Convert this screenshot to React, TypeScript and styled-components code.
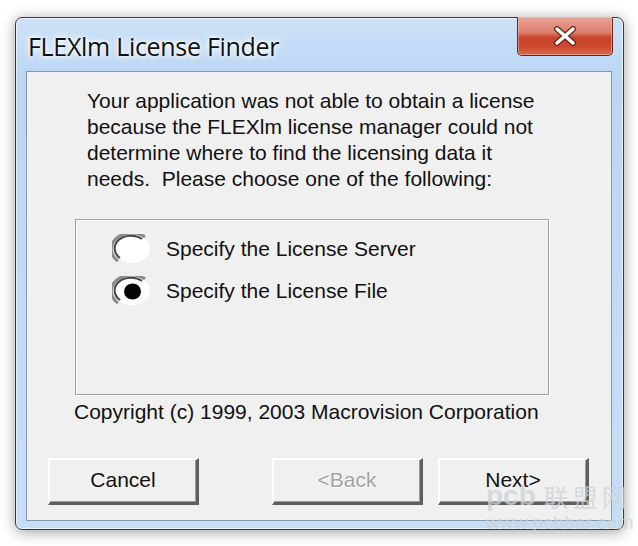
import React from "react";
import styled, { createGlobalStyle } from "styled-components";

const Global = createGlobalStyle`
  html, body { margin: 0; padding: 0; background: #ffffff; }
  body { width: 638px; height: 546px; overflow: hidden; }
`;

const Page = styled.div`
  position: relative;
  width: 638px;
  height: 546px;
  padding: 17px 0 0 15px;
  box-sizing: border-box;
  background: #ffffff;
`;

const Window = styled.div`
  width: 609px;
  height: 513px;
  box-sizing: border-box;
  border: 1px solid #3a3a3a;
  border-radius: 7px;
  background: linear-gradient(180deg, #cde2f8 0%, #b9d6f3 12%, #c3dcf5 60%, #c6def5 100%);
  box-shadow: 0 2px 14px rgba(0, 0, 0, 0.38), inset 0 0 0 1px rgba(255, 255, 255, 0.6);
  padding: 0 11px 8px 10px;
  display: flex;
  flex-direction: column;
`;

const TitleBar = styled.div`
  height: 53px;
  display: flex;
  align-items: flex-start;
  justify-content: space-between;
`;

const Title = styled.div`
  margin-top: 12px;
  margin-left: 2px;
  font-family: "Open Sans", "Noto Sans", sans-serif;
  font-size: 25px;
  line-height: 32px;
  color: #101010;
  text-shadow: 0 0 10px #ffffff, 0 0 6px #ffffff, 0 0 3px #ffffff;
  letter-spacing: -0.3px;
`;

const CloseButton = styled.div`
  width: 96px;
  height: 39px;
  margin-top: -1px;
  margin-right: -1px;
  box-sizing: border-box;
  border: 1px solid #5e2b23;
  border-top: none;
  border-radius: 0 0 5px 5px;
  background: linear-gradient(180deg, #e9a498 0%, #dd7f6e 40%, #c9412a 55%, #cc4b30 80%, #d96a4c 100%);
  box-shadow: inset 0 0 0 1px rgba(255, 200, 190, 0.5);
  display: flex;
  align-items: center;
  justify-content: center;
`;

const Client = styled.div`
  flex: 1;
  box-sizing: border-box;
  border: 1px solid #8598ad;
  background: #f0f0f0;
  display: flex;
  flex-direction: column;
  font-family: "Liberation Sans", Arial, sans-serif;
  font-size: 21px;
  color: #111111;
`;

const Message = styled.p`
  margin: 16px 0 0 60px;
  line-height: 26px;
  width: 470px;
`;

const Group = styled.div`
  margin: 27px 0 0 48px;
  width: 474px;
  height: 176px;
  box-sizing: border-box;
  border: 1px solid #a0a0a0;
  box-shadow: 1px 1px 0 #ffffff, inset 1px 1px 0 #ffffff;
  display: flex;
  flex-direction: column;
  gap: 12px;
  padding: 14px 0 0 36px;
`;

const RadioRow = styled.label`
  display: flex;
  align-items: center;
  height: 30px;
  gap: 14px;
`;

const RadioText = styled.span`
  line-height: 30px;
`;

const Copyright = styled.div`
  margin: 4px 0 0 47px;
  line-height: 26px;
`;

const ButtonRow = styled.div`
  margin: 33px 0 0 21px;
  display: flex;
`;

const Button = styled.div<{ $disabled?: boolean; $gap?: number }>`
  width: 151px;
  height: 47px;
  margin-left: ${(p) => p.$gap ?? 0}px;
  box-sizing: border-box;
  background: #f0f0f0;
  border-top: 2px solid #ffffff;
  border-left: 2px solid #ffffff;
  border-right: 3px solid #5f5f5f;
  border-bottom: 3px solid #5f5f5f;
  box-shadow: inset -1px -1px 0 #a0a0a0;
  display: flex;
  align-items: center;
  justify-content: center;
  padding-bottom: 2px;
  color: ${(p) => (p.$disabled ? "#a3a3a3" : "#111111")};
  text-shadow: ${(p) => (p.$disabled ? "1px 1px 0 #ffffff" : "none")};
`;

const Watermark = styled.div`
  position: absolute;
  left: 486px;
  top: 482px;
  display: flex;
  flex-direction: column;
  align-items: flex-start;
  white-space: nowrap;
  font-family: "Liberation Sans", Arial, "Noto Sans CJK SC", sans-serif;
  color: rgba(205, 210, 215, 0.75);
  pointer-events: none;
`;

const WmTop = styled.div`
  display: flex;
  align-items: center;
  gap: 8px;
  font-size: 28px;
  line-height: 28px;
  font-weight: bold;
`;

const WmCjk = styled.span`
  font-family: "Noto Sans CJK SC", sans-serif;
  font-weight: 400;
  font-size: 25px;
  letter-spacing: 4px;
`;

const WmUrl = styled.div`
  font-size: 19px;
  line-height: 22px;
  margin-top: 2px;
  letter-spacing: 0.3px;
`;

const Radio = ({ checked }: { checked?: boolean }) => (
  <svg width="40" height="30" viewBox="0 0 40 30">
    <ellipse cx="20" cy="15" rx="18" ry="14" fill="#ffffff" />
    <path d="M 6 27 A 17 13.5 0 0 1 33 3" fill="none" stroke="#8a8a8a" strokeWidth="3" />
    <path d="M 8 24 A 14 11 0 0 1 30 5" fill="none" stroke="#444444" strokeWidth="2" />
    <ellipse cx="20.5" cy="15.5" rx="13.5" ry="11.5" fill="#ffffff" />
    {checked && <ellipse cx="20.5" cy="15.5" rx="8.5" ry="8" fill="#050505" />}
  </svg>
);

const CloseGlyph = () => (
  <svg width="26" height="20" viewBox="0 0 26 20">
    <path d="M5 3 L21 17 M21 3 L5 17" stroke="#6a2418" strokeWidth="6" strokeLinecap="round" />
    <path d="M5 3 L21 17 M21 3 L5 17" stroke="#ffffff" strokeWidth="3.5" strokeLinecap="round" />
  </svg>
);

export default function App() {
  return (
    <Page>
      <Global />
      <Window>
        <TitleBar>
          <Title>FLEXlm License Finder</Title>
          <CloseButton>
            <CloseGlyph />
          </CloseButton>
        </TitleBar>
        <Client>
          <Message>
            Your application was not able to obtain a license because the FLEXlm license manager could not
            determine where to find the licensing data it needs.&nbsp; Please choose one of the following:
          </Message>
          <Group>
            <RadioRow>
              <Radio />
              <RadioText>Specify the License Server</RadioText>
            </RadioRow>
            <RadioRow>
              <Radio checked />
              <RadioText>Specify the License File</RadioText>
            </RadioRow>
          </Group>
          <Copyright>Copyright (c) 1999, 2003 Macrovision Corporation</Copyright>
          <ButtonRow>
            <Button>Cancel</Button>
            <Button $disabled $gap={73}>&lt;Back</Button>
            <Button $gap={15}>Next&gt;</Button>
          </ButtonRow>
        </Client>
      </Window>
      <Watermark>
        <WmTop>
          <span>pcb</span>
          <WmCjk>联盟网</WmCjk>
        </WmTop>
        <WmUrl>www.pcbbar.com</WmUrl>
      </Watermark>
    </Page>
  );
}
